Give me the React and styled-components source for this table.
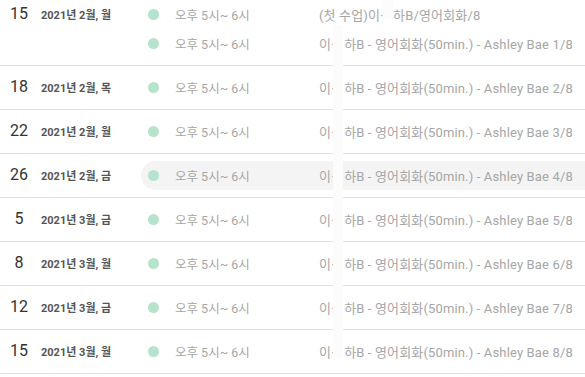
import React from 'react'
import styled, { createGlobalStyle } from 'styled-components'

const GlobalStyle = createGlobalStyle`
  html, body {
    margin: 0;
    padding: 0;
    background: #fff;
    font-family: Roboto, "Noto Sans CJK KR", sans-serif;
    overflow: hidden;
  }
`

const schedule = [
  {
    day: '15',
    sub: '2021년 2월, 월',
    lessons: [
      { time: '오후 5시~ 6시', pre: '(첫 수업)이', post: '하B/영어회화/8' },
      { time: '오후 5시~ 6시', pre: '이', post: '하B - 영어회화(50min.) - Ashley Bae 1/8' },
    ],
  },
  { day: '18', sub: '2021년 2월, 목', n: 2 },
  { day: '22', sub: '2021년 2월, 월', n: 3 },
  { day: '26', sub: '2021년 2월, 금', n: 4, active: true },
  { day: '5', sub: '2021년 3월, 금', n: 5 },
  { day: '8', sub: '2021년 3월, 월', n: 6 },
  { day: '12', sub: '2021년 3월, 금', n: 7 },
  { day: '15', sub: '2021년 3월, 월', n: 8 },
]

const App = () =>
  <>
    <GlobalStyle />
    <List>
      {schedule.map((row, i) =>
        <Row key={i}>
          <DateCol>
            <Day>{row.day}</Day>
            <Sub>{row.sub}</Sub>
          </DateCol>
          <Lessons>
            {(row.lessons || [{
              time: '오후 5시~ 6시',
              pre: '이',
              post: `하B - 영어회화(50min.) - Ashley Bae ${row.n}/8`,
            }]).map((l, j) =>
              <Lesson key={j} active={row.active}>
                <Dot />
                <Time>{l.time}</Time>
                <Title>
                  {l.pre}<Masked>·</Masked>{l.post}
                </Title>
              </Lesson>
            )}
          </Lessons>
        </Row>
      )}
      <Stripe style={{ left: 333, top: 32, width: 10, height: 333 }} />
      <Stripe style={{ left: 383, top: 0, width: 10, height: 25 }} />
    </List>
  </>

export default App

const List = styled.div`
  position: relative;
  width: 585px;
  margin-top: -7px;
`

const Row = styled.div`
  display: flex;
  align-items: flex-start;
  padding: 7px 0;
  border-bottom: 1px solid #e2e2e2;
`

const DateCol = styled.div`
  display: flex;
  align-items: baseline;
  width: 141px;
  flex-shrink: 0;
  height: 29px;
  padding-top: 4px;
  box-sizing: border-box;
`

const Day = styled.span`
  width: 26px;
  margin-left: 6px;
  text-align: center;
  font-size: 16px;
  color: #333;
`

const Sub = styled.span`
  margin-left: 9px;
  font-size: 11px;
  font-weight: 700;
  color: #555;
`

const Lessons = styled.div`
  flex: 1;
  display: flex;
  flex-direction: column;
`

const Lesson = styled.div`
  display: flex;
  align-items: center;
  height: 29px;
  padding-left: 7px;
  border-radius: 15px 0 0 15px;
  background: ${p => p.active ? '#f4f4f4' : 'transparent'};
  font-size: 12.5px;
  color: #a6a6a6;
  white-space: nowrap;
`

const Dot = styled.span`
  width: 11px;
  height: 11px;
  border-radius: 50%;
  background: #b6e3cb;
  flex-shrink: 0;
`

const Time = styled.span`
  width: 144px;
  margin-left: 16px;
  flex-shrink: 0;
`

const Title = styled.span`
  font-size: 13px;
  letter-spacing: 0.15px;
`

const Masked = styled.span`
  display: inline-block;
  width: 13px;
`

const Stripe = styled.div`
  position: absolute;
  background: #fcfcfc;
`
